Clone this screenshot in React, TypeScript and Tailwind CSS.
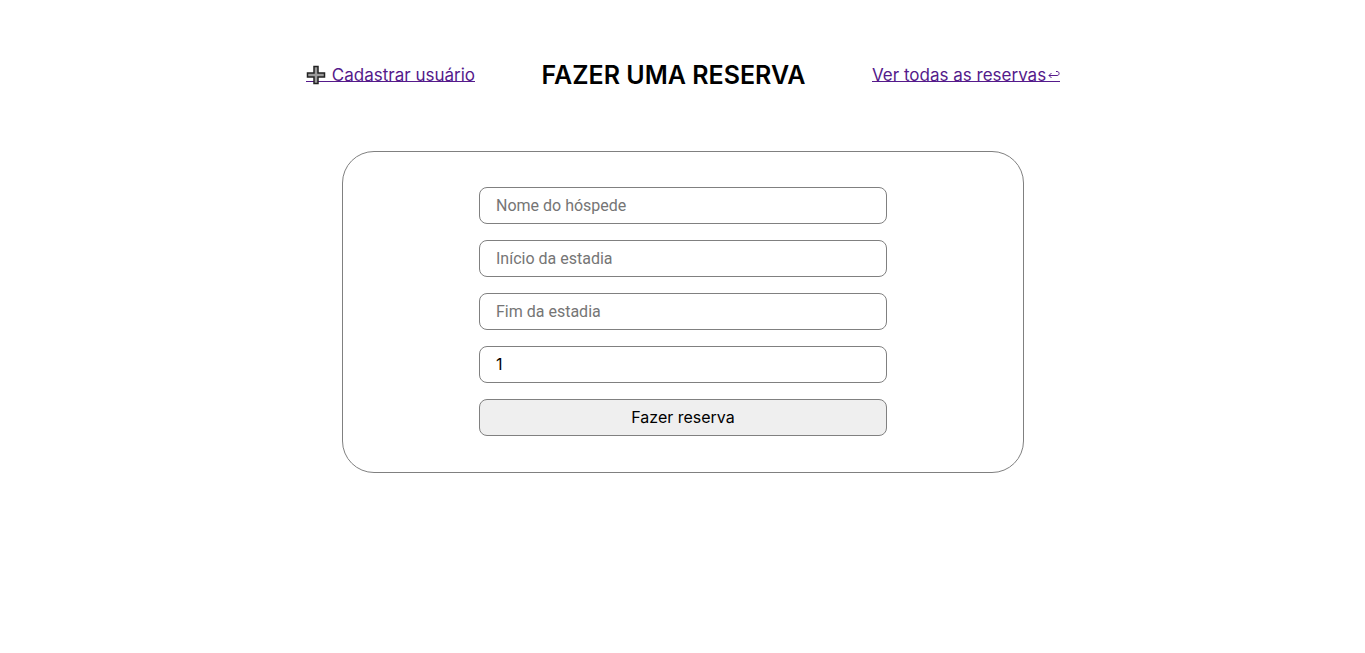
import { useState } from "react";

const field =
  "h-[37px] w-full rounded-lg border border-[#808080] bg-white px-4 text-base placeholder:text-[#757575] placeholder:opacity-100";

const link =
  "flex h-[14px] items-center justify-between whitespace-nowrap border-b border-[#551a8b] font-['Inter',sans-serif] text-[17px] leading-4 text-[#551a8b]";

function PlusIcon() {
  return (
    <svg viewBox="0 0 20 20" className="h-5 w-5 shrink-0" aria-hidden="true">
      <path
        d="M8 1.5h4v6.5h6.5v4H12v6.5H8V12H1.5V8H8z"
        fill="#9b9b9b"
        stroke="#222"
        strokeWidth="1.5"
      />
    </svg>
  );
}

function ReturnIcon() {
  return (
    <svg viewBox="0 0 12 12" className="h-3 w-3 shrink-0" aria-hidden="true">
      <path
        d="M3.5 4L1 6.5 3.5 9M1 6.5h8c2.8 0 2.8-4 0-4H8"
        fill="none"
        stroke="#551a8b"
        strokeWidth="1"
      />
    </svg>
  );
}

export default function App() {
  const [guests, setGuests] = useState("1");

  return (
    <main className="flex flex-col items-center bg-white pl-px pt-[57px] text-black">
      <header className="flex h-9 items-center justify-center gap-16">
        <a href="#usuarios" className={`${link} w-[169px]`}>
          <PlusIcon />
          <span>Cadastrar usuário</span>
        </a>
        <h1 className="w-[269px] whitespace-nowrap text-center font-['Inter',sans-serif] text-[25px] font-semibold leading-9">
          FAZER UMA RESERVA
        </h1>
        <a href="#reservas" className={`${link} w-[188px]`}>
          <span>Ver todas as reservas</span>
          <ReturnIcon />
        </a>
      </header>

      <section className="mt-[58px] flex w-1/2 justify-center rounded-[32px] border border-[#808080] py-[35px]">
        <form
          className="flex w-3/5 flex-col gap-4 pb-px"
          onSubmit={(event) => event.preventDefault()}
        >
          <input
            aria-label="Nome do hóspede"
            placeholder="Nome do hóspede"
            className={`${field} font-['Roboto',sans-serif]`}
          />
          <input
            aria-label="Início da estadia"
            placeholder="Início da estadia"
            className={`${field} font-['Roboto',sans-serif]`}
          />
          <input
            aria-label="Fim da estadia"
            placeholder="Fim da estadia"
            className={`${field} font-['Roboto',sans-serif]`}
          />
          <input
            aria-label="Número de hóspedes"
            inputMode="numeric"
            value={guests}
            onChange={(event) => setGuests(event.target.value)}
            className={`${field} pb-0.5 font-['Inter',sans-serif]`}
          />
          <button
            type="submit"
            className="h-[37px] w-full rounded-lg border border-[#808080] bg-[#efefef] pb-0.5 font-['Inter',sans-serif] text-base"
          >
            Fazer reserva
          </button>
        </form>
      </section>
    </main>
  );
}
